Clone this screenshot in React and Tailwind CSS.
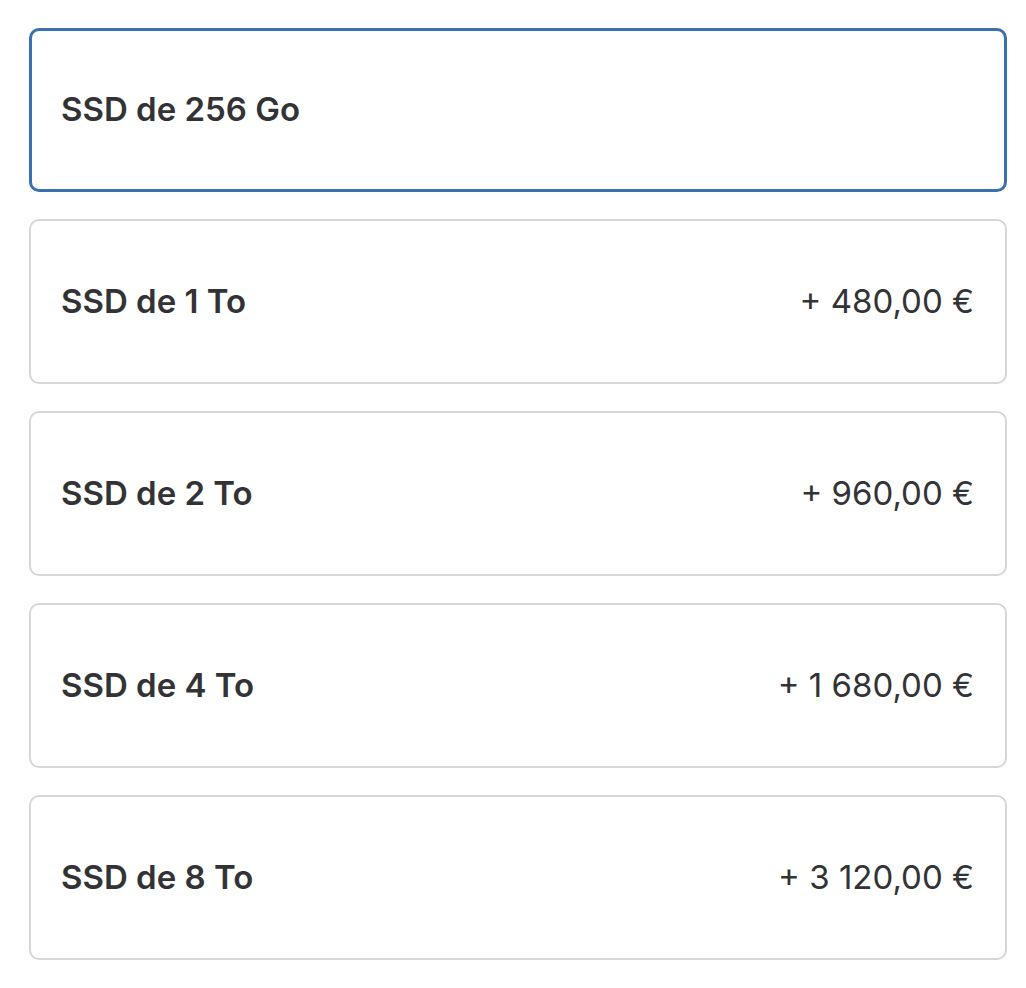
export default function App() {
  const items = [
    { label: "SSD de 256 Go", price: "", selected: true },
    { label: "SSD de 1 To", price: "+ 480,00 €" },
    { label: "SSD de 2 To", price: "+ 960,00 €" },
    { label: "SSD de 4 To", price: "+ 1 680,00 €" },
    { label: "SSD de 8 To", price: "+ 3 120,00 €" },
  ];
  return (
    <div
      className="min-h-[988px] bg-white pt-[28px] pl-[29px] pr-[19px] text-[#333336]"
      style={{ fontFamily: "Inter, 'Noto Sans', sans-serif" }}
    >
      <div className="flex flex-col gap-[27px]">
        {items.map((it) => (
          <div
            key={it.label}
            className={
              it.selected
                ? "flex h-[164px] items-center justify-between rounded-[10px] border-[3px] border-[#3a6fb0] pl-[29px] pr-[30px]"
                : "flex h-[165px] items-center justify-between rounded-[10px] border-2 border-[#d6d6d6] pl-[30px] pr-[31px]"
            }
          >
            <span className="text-[33px] font-semibold">{it.label}</span>
            <span className="text-[33px] font-normal">{it.price}</span>
          </div>
        ))}
      </div>
    </div>
  );
}
